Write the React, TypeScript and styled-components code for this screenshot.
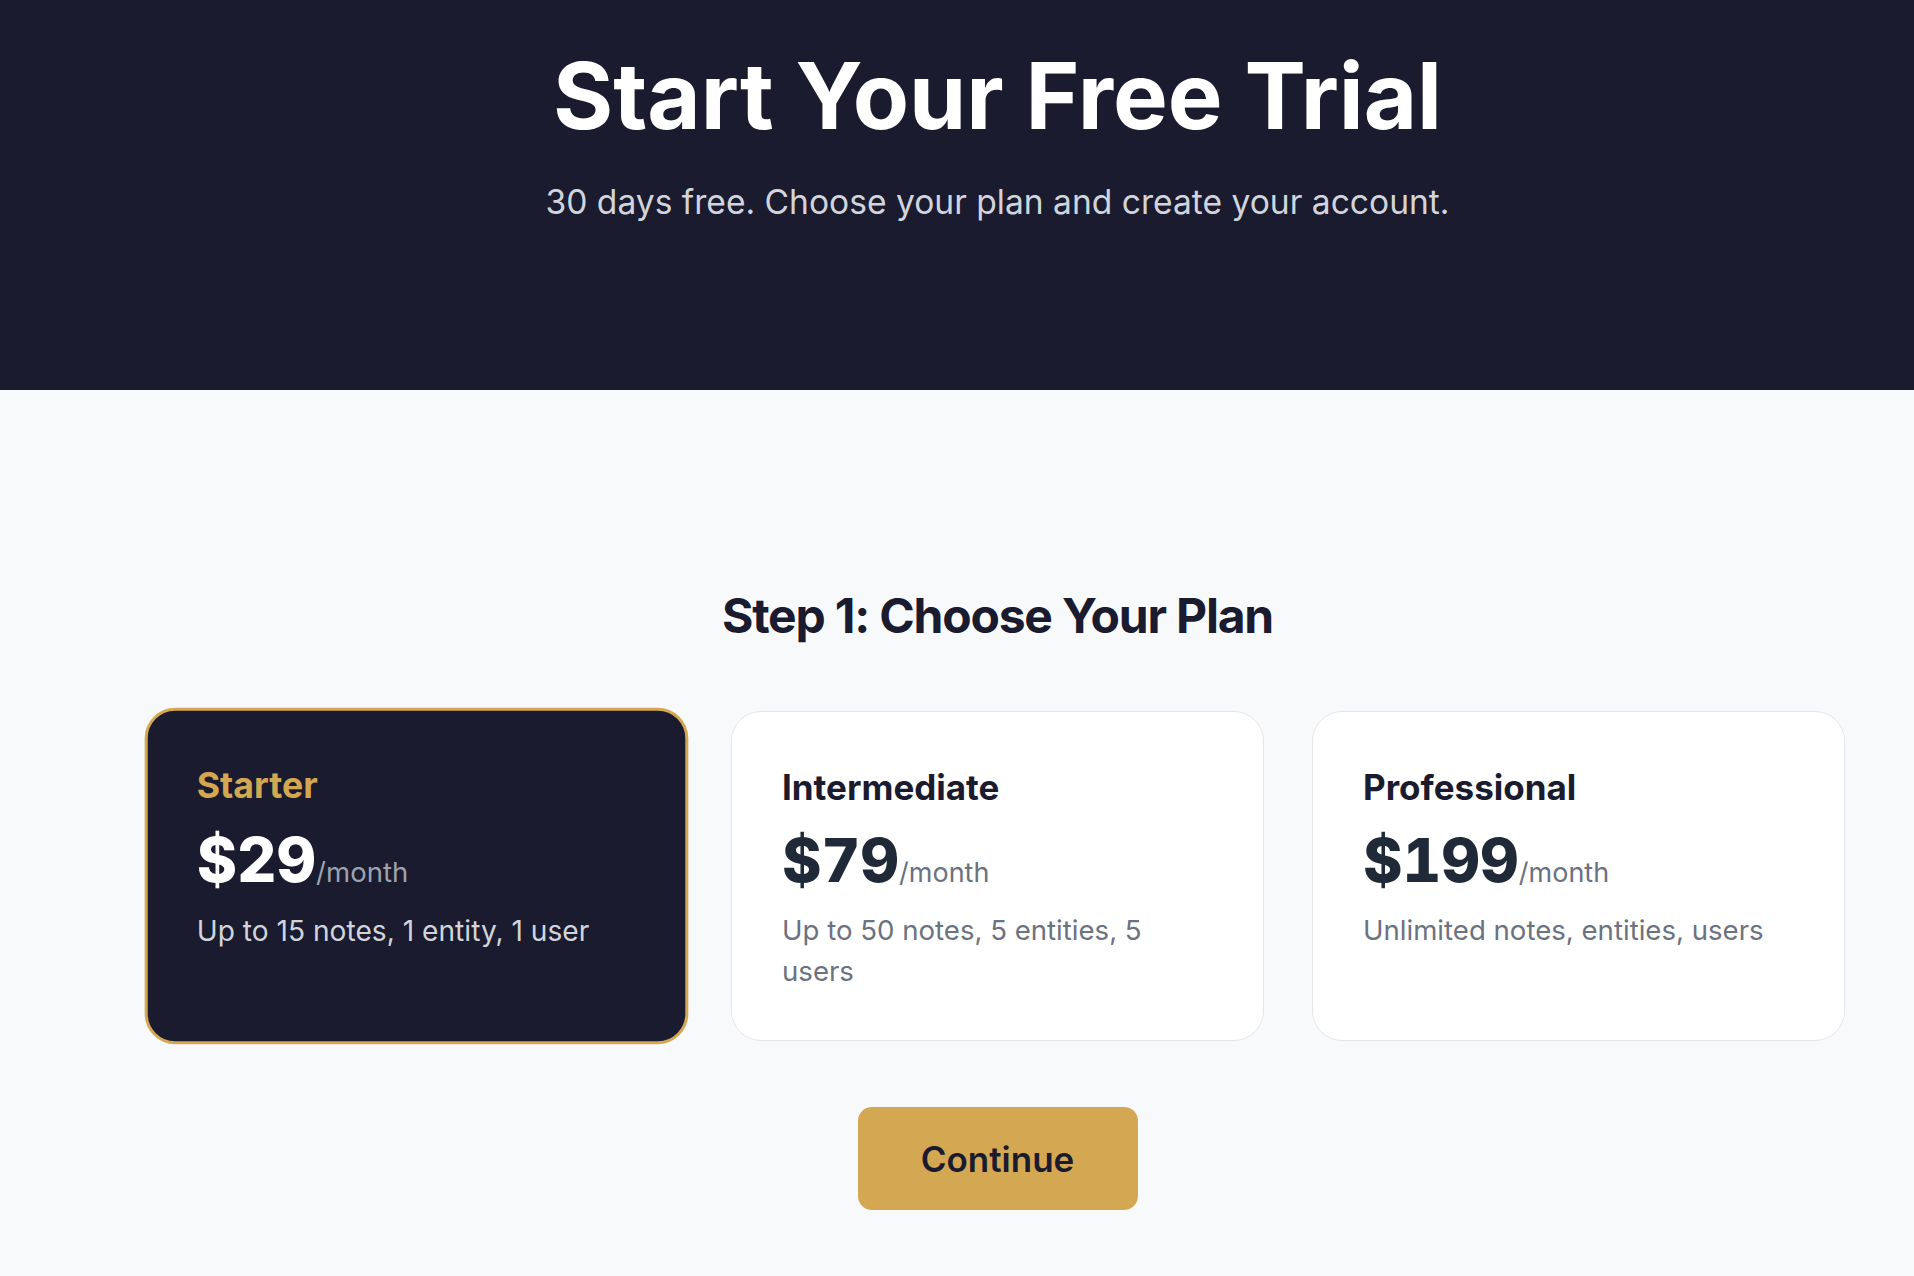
import React, { useState } from "react"
import styled, { createGlobalStyle, css } from "styled-components"

// ---------------------------------------------------------------- data

type Plan = {
	id: string
	name: string
	price: number
	blurb: string
}

const PLANS: Plan[] = [
	{ id: "starter", name: "Starter", price: 29, blurb: "Up to 15 notes, 1 entity, 1 user" },
	{ id: "intermediate", name: "Intermediate", price: 79, blurb: "Up to 50 notes, 5 entities, 5 users" },
	{ id: "professional", name: "Professional", price: 199, blurb: "Unlimited notes, entities, users" },
]

const NAVY = "#1a1b2e"
const GOLD = "#d4a853"

// ---------------------------------------------------------------- page

export default function App() {
	const [selected, setSelected] = useState("starter")

	return (
		<>
			<GlobalStyle />
			<Hero>
				<HeroInner>
					<Title>Start Your Free Trial</Title>
					<Subtitle>30 days free. Choose your plan and create your account.</Subtitle>
				</HeroInner>
			</Hero>
			<Main>
				<StepTitle>Step 1: Choose Your Plan</StepTitle>
				<PlanGrid>
					{PLANS.map((plan) => (
						<PlanCard
							key={plan.id}
							$active={plan.id === selected}
							onClick={() => setSelected(plan.id)}
						>
							<PlanName $active={plan.id === selected}>{plan.name}</PlanName>
							<PriceRow>
								<Price $active={plan.id === selected}>${plan.price}</Price>
								<Per $active={plan.id === selected}>/month</Per>
							</PriceRow>
							<Blurb $active={plan.id === selected}>{plan.blurb}</Blurb>
						</PlanCard>
					))}
				</PlanGrid>
				<ContinueButton type="button">Continue</ContinueButton>
			</Main>
		</>
	)
}

// ---------------------------------------------------------------- styles

const GlobalStyle = createGlobalStyle`
	* { box-sizing: border-box; }
	html, body { margin: 0; padding: 0; }
	body {
		background: #f8f9fb;
		font-family: Inter, "Noto Sans", "Liberation Sans", sans-serif;
		color: ${NAVY};
	}
`

const Hero = styled.header`
	background: ${NAVY};
	height: 390px;
	padding: 45px 0 0 81px;
`

const HeroInner = styled.div`
	display: flex;
	flex-direction: column;
	align-items: center;
	text-align: center;
`

const Title = styled.h1`
	margin: 0;
	font-size: 92px;
	line-height: 101px;
	font-weight: 700;
	color: #ffffff;
`

const Subtitle = styled.p`
	margin: 31px 0 0;
	font-size: 33.6px;
	line-height: 49px;
	font-weight: 400;
	color: #d1d5db;
`

const Main = styled.main`
	display: flex;
	flex-direction: column;
	align-items: center;
	padding: 197px 68px 60px 149px;
`

const StepTitle = styled.h2`
	margin: 0;
	font-size: 48px;
	line-height: 58px;
	font-weight: 700;
	letter-spacing: -0.025em;
	color: ${NAVY};
`

const PlanGrid = styled.div`
	display: grid;
	grid-template-columns: repeat(3, 533px);
	gap: 48px;
	margin-top: 66px;
`

const PlanCard = styled.div<{ $active: boolean }>`
	display: flex;
	flex-direction: column;
	min-height: 330px;
	padding: 55px 50px 48px;
	border-radius: 30px;
	border: 1.5px solid #e5e7eb;
	background: #ffffff;
	cursor: pointer;

	${(p) =>
		p.$active &&
		css`
			background: ${NAVY};
			border: 3.5px solid ${GOLD};
			padding: 53px 48px 46px;
			transform: scale(1.02);
		`}
`

const PlanName = styled.div<{ $active: boolean }>`
	font-size: 35px;
	line-height: 40px;
	font-weight: 700;
	color: ${(p) => (p.$active ? GOLD : NAVY)};
`

const PriceRow = styled.div`
	display: flex;
	align-items: baseline;
	margin-top: 24px;
`

const Price = styled.span<{ $active: boolean }>`
	font-size: 60px;
	line-height: 59px;
	font-weight: 800;
	font-variant-numeric: tabular-nums;
	color: ${(p) => (p.$active ? "#ffffff" : "#1f2937")};
`

const Per = styled.span<{ $active: boolean }>`
	font-size: 27px;
	font-weight: 400;
	color: ${(p) => (p.$active ? "#9ca3af" : "#6b7280")};
`

const Blurb = styled.p<{ $active: boolean }>`
	margin: 20px 0 0;
	font-size: 27.6px;
	line-height: 40.5px;
	font-weight: 400;
	color: ${(p) => (p.$active ? "#d1d5db" : "#6b7280")};
`

const ContinueButton = styled.button`
	margin-top: 66px;
	width: 280px;
	height: 103px;
	border: none;
	border-radius: 14px;
	background: ${GOLD};
	color: ${NAVY};
	font-family: inherit;
	font-size: 35px;
	font-weight: 600;
	cursor: pointer;
`
